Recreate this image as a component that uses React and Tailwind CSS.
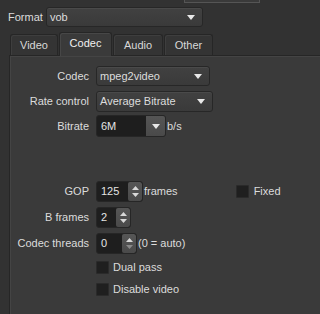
import React from "react";

const Down = ({ c = "#e8e8e8" }) => (
  <svg width="8" height="5" viewBox="0 0 8 5" className="block">
    <path d="M0 0 H8 L4 5 Z" fill={c} />
  </svg>
);

const Combo = ({ w, text, h = "h-[20px]" }) => (
  <div
    className={`${w} ${h} flex items-center justify-between rounded-[3px] border border-[#272727] bg-gradient-to-b from-[#414141] to-[#3a3a3a] pl-[3px] pr-[7px] shadow-[inset_0_1px_0_#4a4a4a]`}
  >
    <span>{text}</span>
    <Down />
  </div>
);

const Spin = ({ w, text, btn = "w-[14px]", downDim = false }) => (
  <div className={`${w} h-[21px] flex rounded-[3px] border border-[#262626] bg-[#1e1e1e] overflow-hidden`}>
    <div className="flex-1 flex items-center pl-[4px] text-[#e4e4e4]">{text}</div>
    <div className={`${btn} flex flex-col items-center justify-center gap-[3px] bg-gradient-to-b from-[#565656] to-[#4a4a4a] rounded-[2px]`}>
      <svg width="7" height="4" viewBox="0 0 7 4" className="block">
        <path d="M0 4 L3.5 0 L7 4 Z" fill="#d8d8d8" />
      </svg>
      <svg width="7" height="4" viewBox="0 0 7 4" className="block">
        <path d="M0 0 H7 L3.5 4 Z" fill={downDim ? "#8a8a8a" : "#d8d8d8"} />
      </svg>
    </div>
  </div>
);

const Check = () => (
  <div className="w-[13px] h-[13px] bg-[#1f1f1f] border border-[#2a2a2a] rounded-[1px]" />
);

const Label = ({ children }) => (
  <div className="w-[79px] shrink-0 text-right pr-0">{children}</div>
);

const Tab = ({ w, children, active }) =>
  active ? (
    <div
      className={`${w} h-[24px] -mb-px relative z-10 flex items-center justify-center rounded-t-[3px] border border-b-0 border-[#262626] bg-[#3a3a3a] text-[#f0f0f0] pb-[2px] shadow-[inset_1px_1px_0_#474747]`}
    >
      {children}
    </div>
  ) : (
    <div
      className={`${w} h-[21px] flex items-center justify-center rounded-t-[3px] border border-b-0 border-[#262626] bg-[#343434] text-[#d8d8d8] shadow-[inset_1px_1px_0_#3e3e3e]`}
    >
      {children}
    </div>
  );

export default function App() {
  return (
    <div
      className="w-[320px] h-[314px] overflow-hidden bg-[#323232] text-[#dcdcdc] text-[11px] leading-none"
      style={{ fontFamily: '"Liberation Sans", Arial, sans-serif' }}
    >
      {/* bottom of a widget above */}
      <div className="ml-[184px] w-[76px] h-[3px] bg-[#3a3a3a] border border-t-0 border-[#555555]" />

      {/* Format row */}
      <div className="mt-[4px] flex items-center pl-[8px] gap-[4px]">
        <span className="w-[34px]">Format</span>
        <Combo w="w-[157px]" text="vob" />
      </div>

      {/* Tabs */}
      <div className="mt-[5px] flex items-end pl-[10px] gap-[1px]">
        <Tab w="w-[48px]">Video</Tab>
        <Tab w="w-[53px]" active>
          Codec
        </Tab>
        <Tab w="w-[50px]">Audio</Tab>
        <Tab w="w-[49px]">Other</Tab>
      </div>

      {/* Pane */}
      <div className="ml-[9px] h-[300px] border-l border-t border-[#262626] bg-[#3a3a3a] shadow-[inset_1px_1px_0_#444444]">
        <div className="flex flex-col">
          <div className="mt-[10px] flex items-center gap-[7px]">
            <Label>Codec</Label>
            <Combo w="w-[114px]" text="mpeg2video" />
          </div>
          <div className="mt-[5px] flex items-center gap-[7px]">
            <Label>Rate control</Label>
            <Combo w="w-[117px]" h="h-[21px]" text="Average Bitrate" />
          </div>
          <div className="mt-[3px] flex items-center gap-[7px]">
            <Label>Bitrate</Label>
            <div className="flex items-center gap-[1px]">
              <div className="w-[70px] h-[22px] flex rounded-[3px] border border-[#262626] bg-[#1e1e1e] overflow-hidden">
                <div className="flex-1 flex items-center pl-[4px] text-[#e4e4e4]">6M</div>
                <div className="w-[19px] flex items-center justify-center bg-gradient-to-b from-[#555555] to-[#4a4a4a]">
                  <Down />
                </div>
              </div>
              <span>b/s</span>
            </div>
          </div>

          <div className="mt-[44px] flex items-center gap-[7px]">
            <Label>GOP</Label>
            <Spin w="w-[47px]" text="125" />
            <span className="-ml-[6px]">frames</span>
            <div className="ml-[51px] flex items-center gap-[5px]">
              <Check />
              <span>Fixed</span>
            </div>
          </div>
          <div className="mt-[5px] flex items-center gap-[7px]">
            <Label>B frames</Label>
            <Spin w="w-[35px]" text="2" />
          </div>
          <div className="mt-[5px] flex items-center gap-[7px]">
            <Label>Codec threads</Label>
            <Spin w="w-[41px]" text="0" downDim />
            <span className="-ml-[6px]">(0 = auto)</span>
          </div>
          <div className="mt-[3px] h-[21px] flex items-center gap-[4px] pl-[86px]">
            <Check />
            <span>Dual pass</span>
          </div>
          <div className="mt-[1px] h-[21px] flex items-center gap-[4px] pl-[86px]">
            <Check />
            <span>Disable video</span>
          </div>
        </div>
      </div>
    </div>
  );
}
